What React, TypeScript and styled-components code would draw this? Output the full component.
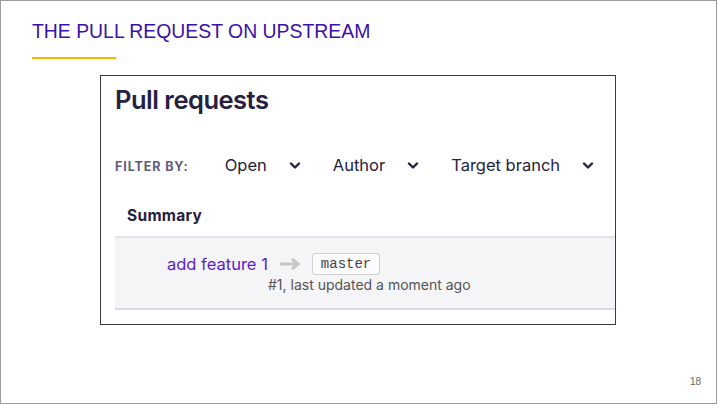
import React from 'react'
import styled, { createGlobalStyle } from 'styled-components'

const GlobalStyle = createGlobalStyle`
    html, body {
        margin: 0;
        padding: 0;
        background: #ffffff;
    }
    * {
        box-sizing: border-box;
    }
`

const Chevron: React.FC = () => (
    <svg width="12" height="8" viewBox="0 0 12 8" aria-hidden="true">
        <polyline
            points="2,1.5 6,5.5 10,1.5"
            fill="none"
            stroke="#25213f"
            strokeWidth="2.4"
            strokeLinecap="round"
            strokeLinejoin="round"
        />
    </svg>
)

const Arrow: React.FC = () => (
    <svg width="20" height="12" viewBox="0 0 20 12" aria-hidden="true">
        <line x1="0" y1="6" x2="16" y2="6" stroke="#c6c6c6" strokeWidth="3" />
        <polyline
            points="12,1 18,6 12,11"
            fill="none"
            stroke="#c6c6c6"
            strokeWidth="3"
        />
    </svg>
)

const filters = ['Open', 'Author', 'Target branch']

export default function App() {
    return (
        <>
            <GlobalStyle />
            <Slide>
                <SlideTitle>THE PULL REQUEST ON UPSTREAM</SlideTitle>
                <Accent />
                <Shot>
                    <PageTitle>Pull requests</PageTitle>
                    <FilterBar>
                        <FilterLabel>FILTER BY:</FilterLabel>
                        {filters.map((f) => (
                            <Dropdown key={f}>
                                {f}
                                <Chevron />
                            </Dropdown>
                        ))}
                    </FilterBar>
                    <ColumnHead>Summary</ColumnHead>
                    <PrRow>
                        <PrLine>
                            <PrLink>add feature 1</PrLink>
                            <Arrow />
                            <Branch>master</Branch>
                        </PrLine>
                        <PrMeta>#1, last updated a moment ago</PrMeta>
                    </PrRow>
                </Shot>
                <PageNumber>18</PageNumber>
            </Slide>
        </>
    )
}

const Slide = styled.div`
    width: 717px;
    height: 404px;
    border: 1px solid #9c9c9c;
    padding: 19px 15px 0 31px;
    display: flex;
    flex-direction: column;
    background: #fff;
`
const SlideTitle = styled.div`
    font-family: 'Liberation Sans', Arial, sans-serif;
    font-size: 19.4px;
    line-height: 22px;
    color: #3c10a8;
`
const Accent = styled.div`
    width: 84px;
    height: 2px;
    margin-top: 15px;
    background: #f5b700;
`
const Shot = styled.div`
    width: 516px;
    height: 250px;
    margin: 16px 0 0 68px;
    border: 1px solid #3a3a3a;
    padding: 8px 0 0 14px;
    display: flex;
    flex-direction: column;
    font-family: Inter, 'Noto Sans', sans-serif;
    color: #25213f;
`
const PageTitle = styled.div`
    font-size: 25.5px;
    line-height: 32px;
    font-weight: 600;
    letter-spacing: -0.5px;
`
const FilterBar = styled.div`
    display: flex;
    align-items: center;
    gap: 32px;
    margin-top: 39px;
    height: 20px;
    white-space: nowrap;
`
const FilterLabel = styled.div`
    flex-shrink: 0;
    font-size: 12.5px;
    font-weight: 700;
    letter-spacing: 0.9px;
    color: #5f5b78;
    margin-right: 4px;
    padding-top: 3px;
`
const Dropdown = styled.div`
    flex-shrink: 0;
    display: flex;
    align-items: center;
    gap: 22px;
    font-size: 16.5px;
    line-height: 20px;
    svg {
        margin-top: 1px;
    }
`
const ColumnHead = styled.div`
    margin-top: 32px;
    margin-left: 12px;
    font-size: 15.5px;
    line-height: 18px;
    font-weight: 700;
    letter-spacing: 0.3px;
`
const PrRow = styled.div`
    margin-top: 11px;
    border-top: 2px solid #e4e2e8;
    border-bottom: 2px solid #dcd8e6;
    background: #f5f4f7;
    padding: 15px 0 15px 52px;
`
const PrLine = styled.div`
    display: flex;
    align-items: center;
    height: 22px;
    svg {
        margin: 0 12px 0 12px;
    }
`
const PrLink = styled.span`
    font-size: 16.5px;
    line-height: 20px;
    color: #5a21cf;
`
const Branch = styled.span`
    font-family: 'Liberation Mono', 'Courier New', monospace;
    font-size: 14px;
    line-height: 20px;
    color: #444;
    background: #fbfbfb;
    border: 1px solid #cfcfcf;
    border-radius: 3px;
    padding: 0 8px;
`
const PrMeta = styled.div`
    margin-top: 1px;
    padding-left: 101px;
    font-size: 14px;
    line-height: 17px;
    color: #555;
`
const PageNumber = styled.div`
    margin-top: auto;
    margin-bottom: 15px;
    align-self: flex-end;
    font-family: 'Liberation Sans', Arial, sans-serif;
    font-size: 10px;
    line-height: 12px;
    color: #666;
`
